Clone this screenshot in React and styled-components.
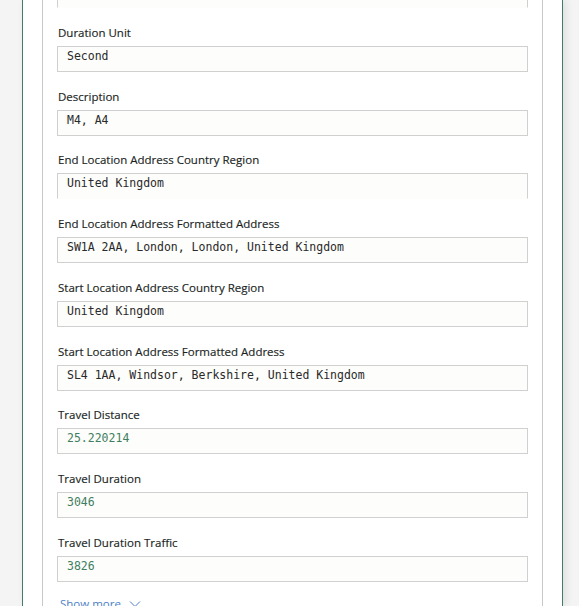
import React from "react";
import styled, { createGlobalStyle } from "styled-components";

const Global = createGlobalStyle`
  html, body { margin: 0; padding: 0; background: #f4f4f4; overflow: hidden; }
  body { font-family: "Segoe UI", "Open Sans", "Noto Sans", sans-serif; }
`;

const Page = styled.div`
  display: flex;
  height: 606px;
  padding-left: 22px;
  overflow: hidden;
`;

const Panel = styled.div`
  box-sizing: border-box;
  width: 541px;
  background: #ffffff;
  border-left: 1px solid #3f7d69;
  border-right: 1px solid #3f7d69;
  box-shadow: 3px 0 8px rgba(0, 0, 0, 0.09);
  padding: 0 19px;
  display: flex;
`;

const Card = styled.div`
  flex: 1;
  border-left: 1px solid #c8c8c8;
  border-right: 1px solid #c8c8c8;
  padding: 0 14px;
  margin-top: -40px;
  display: flex;
  flex-direction: column;
`;

const Field = styled.div`
  display: flex;
  flex-direction: column;
  margin-bottom: 15.75px;
`;

const Label = styled.div`
  font-size: 11.5px;
  line-height: 18px;
  color: #201f1e;
  margin-bottom: 4px;
  padding-left: 1px;
  white-space: nowrap;
  -webkit-text-stroke: 0.15px #201f1e;
`;

const Value = styled.div`
  box-sizing: border-box;
  height: 26px;
  background: #fdfdfb;
  border: 1px solid #d0d0d0;
  border-bottom-color: ${(p) => (p.$open ? "transparent" : "#d0d0d0")};
  padding: 1px 9px 0;
  font-family: "DejaVu Sans Mono", "Liberation Mono", monospace;
  font-size: 11.5px;
  line-height: 17px;
  color: ${(p) => (p.$num ? "#3f7f5f" : "#2a2a2a")};
  white-space: nowrap;
  overflow: hidden;
`;

const ShowMore = styled.div`
  display: flex;
  align-items: center;
  gap: 8px;
  margin-top: -3px;
  padding-left: 3px;
  font-size: 11.5px;
  line-height: 18px;
  color: #4a7fc6;
`;

const fields = [
  { label: "Duration", value: "", open: true },
  { label: "Duration Unit", value: "Second" },
  { label: "Description", value: "M4, A4" },
  { label: "End Location Address Country Region", value: "United Kingdom", open: true },
  { label: "End Location Address Formatted Address", value: "SW1A 2AA, London, London, United Kingdom" },
  { label: "Start Location Address Country Region", value: "United Kingdom" },
  { label: "Start Location Address Formatted Address", value: "SL4 1AA, Windsor, Berkshire, United Kingdom" },
  { label: "Travel Distance", value: "25.220214", num: true },
  { label: "Travel Duration", value: "3046", num: true },
  { label: "Travel Duration Traffic", value: "3826", num: true },
];

export default function App() {
  return (
    <>
      <Global />
      <Page>
        <Panel>
          <Card>
            {fields.map((f) => (
              <Field key={f.label}>
                <Label>{f.label}</Label>
                <Value $num={f.num} $open={f.open}>{f.value}</Value>
              </Field>
            ))}
            <ShowMore>
              Show more
              <svg width="12" height="8" viewBox="0 0 12 8" fill="none" stroke="#4a7fc6" strokeWidth="1">
                <path d="M1 1.5 L6 6.5 L11 1.5" />
              </svg>
            </ShowMore>
          </Card>
        </Panel>
      </Page>
    </>
  );
}
